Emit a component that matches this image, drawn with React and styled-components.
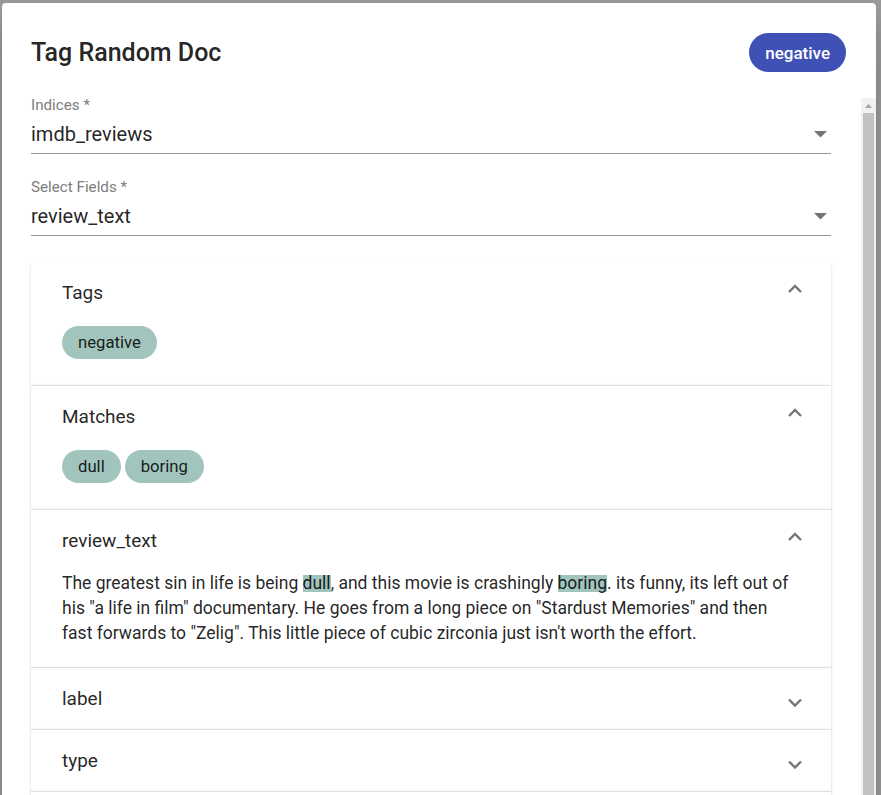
import React from 'react';
import styled, { createGlobalStyle } from 'styled-components';

const GlobalStyle = createGlobalStyle`
  body {
    margin: 0;
    background: #9a9a9a;
    font-family: Roboto, "Liberation Sans", sans-serif;
    overflow: hidden;
  }
`;

const Backdrop = styled.div`
  height: 795px;
  box-sizing: border-box;
  padding: 3px 5px 0 2px;
  overflow: hidden;
  background: #9a9a9a;
`;

const Dialog = styled.div`
  height: 830px;
  background: #fff;
  border-radius: 4px 4px 0 0;
  display: flex;
  flex-direction: column;
  box-shadow: 0 11px 15px -7px rgba(0,0,0,0.2), 0 24px 38px 3px rgba(0,0,0,0.14);
`;

const Header = styled.div`
  display: flex;
  align-items: center;
  justify-content: space-between;
  padding: 30px 30px 25px 29px;
`;

const Title = styled.h2`
  margin: 0;
  font-size: 25px;
  font-weight: 500;
  color: rgba(0,0,0,0.87);
`;

const Chip = styled.span`
  display: inline-flex;
  align-items: center;
  height: ${p => (p.$primary ? '39px' : '33px')};
  padding: 0 16px;
  border-radius: 20px;
  font-size: ${p => (p.$primary ? '17px' : '16.7px')};
  font-weight: ${p => (p.$primary ? 500 : 400)};
  background: ${p => (p.$primary ? '#3f51b5' : '#a1c4bc')};
  color: ${p => (p.$primary ? '#fff' : 'rgba(0,0,0,0.87)')};
`;

const Body = styled.div`
  flex: 1;
  display: flex;
  min-height: 0;
`;

const Content = styled.div`
  flex: 1;
  padding: 0 30px 0 29px;
  overflow: hidden;
`;

const Field = styled.div`
  margin-bottom: ${p => p.$gap || '25px'};
`;

const Label = styled.div`
  font-size: 15.2px;
  line-height: 17px;
  color: #7d7d7d;
  margin-bottom: 8px;
`;

const SelectRow = styled.div`
  display: flex;
  align-items: center;
  justify-content: space-between;
  padding-bottom: 7px;
  border-bottom: 1px solid #949494;
`;

const Value = styled.span`
  font-size: 20px;
  line-height: 24px;
  color: rgba(0,0,0,0.87);
`;

const DropArrow = styled.svg`
  width: 13px;
  height: 7px;
  margin-right: 4px;
  fill: #757575;
`;

const Accordion = styled.div`
  border-radius: 4px;
`;

const Panel = styled.div`
  background: #fff;
  border-top: ${p => (p.$first ? 'none' : '1px solid rgba(0,0,0,0.12)')};
  border-radius: ${p => (p.$first ? '4px 4px 0 0' : '0')};
  box-shadow: 0 2px 1px -1px rgba(0,0,0,0.2), 0 1px 1px 0 rgba(0,0,0,0.14), 0 1px 3px 0 rgba(0,0,0,0.12);
`;

const Summary = styled.div`
  display: flex;
  align-items: center;
  justify-content: space-between;
  height: ${p => (p.$open ? '60px' : '61px')};
  padding: 0 28px 0 31px;
`;

const SummaryTitle = styled.span`
  font-size: 19px;
  color: rgba(0,0,0,0.87);
`;

const Chevron = styled.svg`
  width: 16px;
  height: 10px;
  fill: none;
  stroke: #757575;
  stroke-width: 2.4;
  transform: translateY(${p => (p.$up ? '-3px' : '3.5px')});
`;

const Details = styled.div`
  padding: ${p => (p.$text ? '1px 30px 21px 31px' : '4px 30px 26px 31px')};
`;

const ChipRow = styled.div`
  display: flex;
  gap: 4px;
`;

const Text = styled.p`
  margin: 0;
  font-size: 17.5px;
  line-height: 25px;
  color: rgba(0,0,0,0.87);
`;

const Mark = styled.mark`
  display: inline-block;
  line-height: 17px;
  background: #a1c4bc;
  color: inherit;
`;

const Scrollbar = styled.div`
  width: 15px;
  margin-top: 1px;
  background: #f1f1f1;
  display: flex;
  flex-direction: column;
`;

const ScrollButton = styled.div`
  height: 15px;
  display: flex;
  align-items: center;
  justify-content: center;
  svg {
    width: 7px;
    height: 4px;
    fill: #a3a3a3;
  }
`;

const Thumb = styled.div`
  flex: 1;
  margin: 0 2px;
  background: #c1c1c1;
`;

function Select({ label, value, gap }) {
  return (
    <Field $gap={gap}>
      <Label>{label}</Label>
      <SelectRow>
        <Value>{value}</Value>
        <DropArrow viewBox="0 0 13 7">
          <polygon points="0,0 13,0 6.5,6.5" />
        </DropArrow>
      </SelectRow>
    </Field>
  );
}

function Section({ title, open, first, text, children }) {
  return (
    <Panel $first={first}>
      <Summary $open={open}>
        <SummaryTitle>{title}</SummaryTitle>
        <Chevron viewBox="0 0 16 10" $up={open}>
          {open ? <polyline points="2,8 8,2 14,8" /> : <polyline points="2,2 8,8 14,2" />}
        </Chevron>
      </Summary>
      {open && <Details $text={text}>{children}</Details>}
    </Panel>
  );
}

export default function App() {
  return (
    <>
      <GlobalStyle />
      <Backdrop>
        <Dialog>
          <Header>
            <Title>Tag Random Doc</Title>
            <Chip $primary>negative</Chip>
          </Header>
          <Body>
            <Content>
              <Select label="Indices *" value="imdb_reviews" />
              <Select label="Select Fields *" value="review_text" gap="26px" />
              <Accordion>
                <Section title="Tags" open first>
                  <ChipRow>
                    <Chip>negative</Chip>
                  </ChipRow>
                </Section>
                <Section title="Matches" open>
                  <ChipRow>
                    <Chip>dull</Chip>
                    <Chip>boring</Chip>
                  </ChipRow>
                </Section>
                <Section title="review_text" open text>
                  <Text>
                    The greatest sin in life is being <Mark>dull</Mark>, and this movie is crashingly{' '}
                    <Mark>boring</Mark>. its funny, its left out of his "a life in film" documentary. He goes
                    from a long piece on "Stardust Memories" and then fast forwards to "Zelig". This little
                    piece of cubic zirconia just isn't worth the effort.
                  </Text>
                </Section>
                <Section title="label" />
                <Section title="type" />
                <Section title="id" />
              </Accordion>
            </Content>
            <Scrollbar>
              <ScrollButton>
                <svg viewBox="0 0 7 4">
                  <polygon points="0,4 3.5,0 7,4" />
                </svg>
              </ScrollButton>
              <Thumb />
            </Scrollbar>
          </Body>
        </Dialog>
      </Backdrop>
    </>
  );
}
